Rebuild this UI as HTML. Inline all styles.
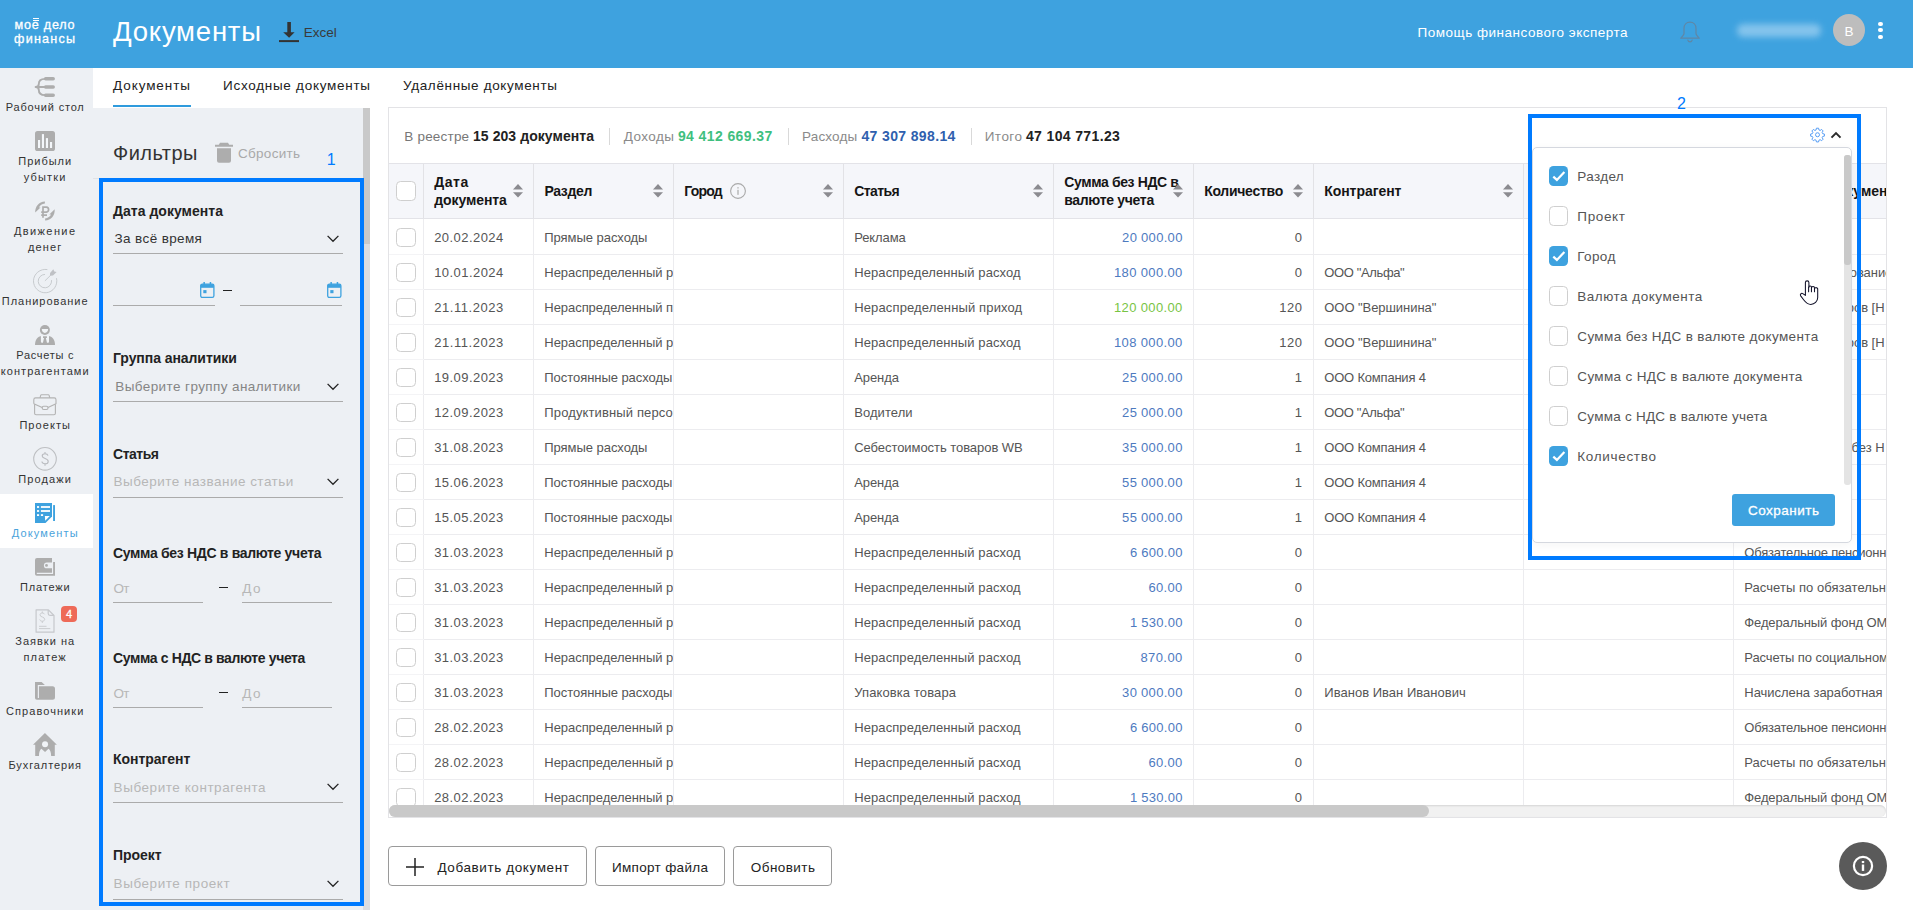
<!DOCTYPE html>
<html lang="ru"><head><meta charset="utf-8"><title>Документы</title>
<style>
html,body{margin:0;padding:0;}
body{width:1913px;height:910px;overflow:hidden;background:#fff;position:relative;font-family:"Liberation Sans", sans-serif;}
.a{position:absolute;box-sizing:border-box;}
.t{position:absolute;white-space:nowrap;font-family:"Liberation Sans", sans-serif;}
svg{position:absolute;overflow:visible;}
</style></head><body>
<div class="a" style="left:0px;top:0px;width:1913px;height:68px;background:#3ea2df;"></div>
<div class="a" style="left:0px;top:68px;width:93px;height:842px;background:#edf0f4;"></div>
<div class="a" style="left:93px;top:108px;width:277px;height:802px;background:#edf0f4;"></div>
<span class="t" style="left:14.60px;top:16.13px;font-size:12.6px;line-height:18px;font-weight:400;color:#fff;letter-spacing:0.772px;-webkit-text-stroke:0.3px #fff;">мое дело</span>
<span class="t" style="left:14.10px;top:30.13px;font-size:12.6px;line-height:18px;font-weight:400;color:#fff;letter-spacing:1.221px;-webkit-text-stroke:0.3px #fff;">финансы</span>
<div class="a" style="left:33px;top:18.4px;width:6px;height:1px;background:#fff;"></div>
<div class="a" style="left:33px;top:20.3px;width:6px;height:1px;background:#fff;"></div>
<span class="t" style="left:113.00px;top:12.17px;font-size:27.5px;line-height:40px;font-weight:400;color:#fff;letter-spacing:0.779px;">Документы</span>
<svg style="left:278px;top:20px" width="22" height="24" viewBox="0 0 22 24"><path d="M9.3 2.1h3.6v10.1h3.7L11.1 17.7 5.2 12.2h4.1z" fill="#333"/><rect x="1" y="20.1" width="20" height="2" fill="#333"/></svg>
<span class="t" style="left:303.80px;top:23.12px;font-size:13.5px;line-height:20px;font-weight:400;color:#3a3a3a;letter-spacing:-0.004px;">Excel</span>
<span class="t" style="left:1417.60px;top:23.12px;font-size:13.5px;line-height:20px;font-weight:400;color:#fff;letter-spacing:0.498px;">Помощь финансового эксперта</span>
<svg style="left:1678px;top:20px" width="24" height="26" viewBox="0 0 24 26"><path d="M12 2.2c-3.6 0-6 2.7-6 6.2v5.2c0 1.6-1.6 3-3.3 4.6h18.6c-1.7-1.6-3.3-3-3.3-4.6V8.4c0-3.5-2.4-6.2-6-6.2z" fill="none" stroke="#5f87a6" stroke-width="1.2" stroke-linejoin="round"/><path d="M9.6 19.6c.3 1.4 1.2 2.2 2.4 2.2s2.100-.8 2.4-2.200" fill="none" stroke="#5f87a6" stroke-width="1.2"/></svg>
<div class="a" style="left:1737px;top:24px;width:84px;height:13px;background:#8cc8ee;border-radius:6px;filter:blur(3px);opacity:.9"></div>
<div class="a" style="left:1833px;top:14px;width:32px;height:32px;border-radius:50%;background:#bdbdbd"></div>
<span class="t" style="left:1849.00px;transform:translateX(-50%);top:21.62px;font-size:13.5px;line-height:20px;font-weight:400;color:#fff;">В</span>
<div class="a" style="left:1878.3px;top:21.5px;width:4.4px;height:4.4px;border-radius:50%;background:#fff"></div>
<div class="a" style="left:1878.3px;top:28px;width:4.4px;height:4.4px;border-radius:50%;background:#fff"></div>
<div class="a" style="left:1878.3px;top:34.6px;width:4.4px;height:4.4px;border-radius:50%;background:#fff"></div>
<div class="a" style="left:0px;top:494px;width:93px;height:54px;background:#fff;"></div>
<span class="t" style="left:45.20px;transform:translateX(-50%);top:99.19px;font-size:11px;line-height:16px;font-weight:400;color:#333;letter-spacing:0.812px;">Рабочий стол</span>
<span class="t" style="left:45.20px;transform:translateX(-50%);top:153.19px;font-size:11px;line-height:16px;font-weight:400;color:#333;letter-spacing:0.958px;">Прибыли</span>
<span class="t" style="left:45.20px;transform:translateX(-50%);top:169.19px;font-size:11px;line-height:16px;font-weight:400;color:#333;letter-spacing:1.194px;">убытки</span>
<span class="t" style="left:45.20px;transform:translateX(-50%);top:223.19px;font-size:11px;line-height:16px;font-weight:400;color:#333;letter-spacing:1.405px;">Движение</span>
<span class="t" style="left:45.20px;transform:translateX(-50%);top:239.19px;font-size:11px;line-height:16px;font-weight:400;color:#333;letter-spacing:1.162px;">денег</span>
<span class="t" style="left:45.20px;transform:translateX(-50%);top:293.19px;font-size:11px;line-height:16px;font-weight:400;color:#333;letter-spacing:0.966px;">Планирование</span>
<span class="t" style="left:45.20px;transform:translateX(-50%);top:347.19px;font-size:11px;line-height:16px;font-weight:400;color:#333;letter-spacing:0.706px;">Расчеты с</span>
<span class="t" style="left:45.20px;transform:translateX(-50%);top:363.19px;font-size:11px;line-height:16px;font-weight:400;color:#333;letter-spacing:1.066px;">контрагентами</span>
<span class="t" style="left:45.20px;transform:translateX(-50%);top:417.19px;font-size:11px;line-height:16px;font-weight:400;color:#333;letter-spacing:1.060px;">Проекты</span>
<span class="t" style="left:45.20px;transform:translateX(-50%);top:471.19px;font-size:11px;line-height:16px;font-weight:400;color:#333;letter-spacing:1.124px;">Продажи</span>
<span class="t" style="left:45.20px;transform:translateX(-50%);top:525.19px;font-size:11px;line-height:16px;font-weight:400;color:#4aa3dc;letter-spacing:1.150px;">Документы</span>
<span class="t" style="left:45.20px;transform:translateX(-50%);top:579.19px;font-size:11px;line-height:16px;font-weight:400;color:#333;letter-spacing:0.846px;">Платежи</span>
<span class="t" style="left:45.20px;transform:translateX(-50%);top:633.19px;font-size:11px;line-height:16px;font-weight:400;color:#333;letter-spacing:1.015px;">Заявки на</span>
<span class="t" style="left:45.20px;transform:translateX(-50%);top:649.19px;font-size:11px;line-height:16px;font-weight:400;color:#333;letter-spacing:1.134px;">платеж</span>
<span class="t" style="left:45.20px;transform:translateX(-50%);top:703.19px;font-size:11px;line-height:16px;font-weight:400;color:#333;letter-spacing:1.066px;">Справочники</span>
<span class="t" style="left:45.20px;transform:translateX(-50%);top:757.19px;font-size:11px;line-height:16px;font-weight:400;color:#333;letter-spacing:0.895px;">Бухгалтерия</span>
<svg style="left:35px;top:77px" width="20" height="20" viewBox="0 0 20 20"><g fill="none" stroke="#adadad" stroke-linecap="round"><path d="M10.600 1.800H18.200M10.600 10H18.200M10.600 18.200H18.200" stroke-width="3.500"/><path d="M10 1.900C5.500 1.900 3.800 4 3.800 7C3.800 9 2.500 10 0.600 10C2.500 10 3.800 11 3.800 13C3.800 16 5.500 18.100 10 18.100M0.600 10H10" stroke-width="1.900"/></g></svg>
<svg style="left:35px;top:131px" width="20" height="20" viewBox="0 0 20 20"><rect width="20" height="20" rx="2.600" fill="#adadad"/><g fill="#f4f7fa"><rect x="3" y="9" width="2.100" height="8"/><rect x="6.900" y="3.100" width="2.100" height="13.900"/><rect x="10.900" y="7.100" width="2.100" height="9.900"/><rect x="15" y="11" width="2.100" height="6"/></g></svg>
<svg style="left:35px;top:201px" width="20" height="20" viewBox="0 0 20 20"><g fill="#adadad"><path d="M9.900 0.400V2.600C7 2.800 4.900 4.300 4 6.500H5.500L0.200 11.500C0 5.500 3.800 0.800 9.900 0.400Z"/><path d="M10.100 19.600V17.400C13 17.200 15.100 15.700 16 13.600H14.300L19.700 8.200C20 14.500 16.200 19.200 10.100 19.600Z"/></g><path d="M8 16.800V6.050H11.400A2.550 2.550 0 0 1 11.400 11.100H6.200M6.200 14.150H12" fill="none" stroke="#adadad" stroke-width="1.700"/></svg>
<svg style="left:33px;top:269px" width="24" height="24" viewBox="0 0 24 24"><g fill="none" stroke="#c3c6ca" stroke-width="0.900" stroke-linecap="round"><path d="M14 0.500A11.700 11.700 0 1 0 23.600 9.500"/><path d="M11.600 5.400A6.700 6.700 0 1 0 18.600 11.500"/><path d="M12.200 11.600L17.400 6.500"/></g><path d="M16.900 6.700L17.100 3.900L20.300 0.300L21.300 2.500L23.600 3.100L20 6.600Z" fill="#bfc1c5"/></svg>
<svg style="left:35px;top:325px" width="20" height="20" viewBox="0 0 20 20"><circle cx="9.900" cy="5" r="5" fill="#adadad"/><path d="M6.750 4H13.100C13.100 6.300 11.700 7.900 9.900 7.900C8.100 7.900 6.750 6.300 6.750 4Z" fill="#f1f4f7"/><path d="M0 20C0 14.500 3 11 6.500 11H13.500C17 11 20 14.500 20 20Z" fill="#adadad"/><path d="M5.900 11H14V16.400C14 17.300 13.500 17.800 12.800 17.800H7.100C6.400 17.800 5.900 17.300 5.900 16.400Z" fill="#f1f4f7"/><path d="M8 11.200H11.900V12.900H10.900L12 18H7.900L9 12.900H8Z" fill="#adadad"/></svg>
<svg style="left:33px;top:393px" width="24" height="24" viewBox="0 0 24 24"><g fill="none" stroke="#b2b2b2" stroke-width="1.100" stroke-linejoin="round"><path d="M7 4.900L7.700 2.400Q7.900 1.800 8.500 1.800H15.300Q15.900 1.800 16.100 2.400L16.800 4.900"/><path d="M0.800 10.700V6.700Q0.800 4.900 2.600 4.900H21.200Q23 4.900 23 6.700V10.700L15 14.600M0.800 10.700L9.200 14.600"/><rect x="9.200" y="13.300" width="5.800" height="3.200" rx="1.500"/><path d="M1.600 11.200V20.200Q1.600 21.700 3.100 21.700H20.900Q22.400 21.700 22.400 20.200V11.200"/></g></svg>
<svg style="left:33px;top:447px" width="24" height="24" viewBox="0 0 24 24"><circle cx="12" cy="11.800" r="11.300" fill="none" stroke="#bdbfc2" stroke-width="1.100"/><path d="M15 8.700C14.700 7.400 13.600 6.700 12 6.700C10.300 6.700 9.200 7.600 9.200 9C9.200 12.200 15.200 10.900 15.200 14.400C15.200 15.800 14 16.800 12 16.800C10.300 16.800 9.100 16 8.900 14.500M12 5V6.700M12 16.800V18.700" fill="none" stroke="#b9bbbf" stroke-width="1.100"/></svg>
<svg style="left:35px;top:503px" width="20" height="20" viewBox="0 0 20 20"><path d="M0 0H17V13.500L10.500 20H0Z" fill="#3ea2df"/><g fill="#fff"><rect x="2" y="3.100" width="2.100" height="1.800"/><rect x="5.900" y="3.100" width="9.100" height="1.800"/><rect x="2" y="7.100" width="2.100" height="1.800"/><rect x="5.900" y="7.100" width="9.100" height="1.800"/><rect x="2" y="11.200" width="2.100" height="1.800"/><rect x="5.900" y="11.200" width="2.200" height="1.800"/><path d="M9.900 13H14.800L10.200 17.800Z"/></g><rect x="18.100" y="2.100" width="1.900" height="15.900" fill="#3ea2df"/></svg>
<svg style="left:35px;top:557px" width="20" height="20" viewBox="0 0 20 20"><path d="M2 1.100H17V5.500H11.800A2.900 2.900 0 0 0 11.800 11.300H17V15.750H1.800V17.100H18.100V5H20V18.700H1.800Q0 18.700 0 16.900V3.100Q0 1.100 2 1.100Z" fill="#adadad"/><circle cx="11.500" cy="8.450" r="1.400" fill="#adadad"/></svg>
<svg style="left:35px;top:609px" width="20" height="24" viewBox="0 0 20 24"><g fill="none" stroke="#c6c8cc" stroke-width="1.200" stroke-linejoin="round"><path d="M1.100 0.800H13.400L19 6.500V23.200H1.100Z"/><path d="M13.200 1V4.500Q13.200 6.300 15 6.300H18.800"/></g><g fill="none" stroke="#c6c8cc" stroke-width="0.900"><path d="M9.600 5.300C9.300 4.400 8.400 4 7.300 4C5.900 4 5 4.700 5 5.900C5 8.500 9.700 7.500 9.700 10.300C9.700 11.400 8.800 12.200 7.300 12.200C5.900 12.200 5 11.600 4.700 10.500M7.300 2.400V4M7.300 12.200V14"/><path d="M4 17.300H11.500M4 19.600H15.300"/></g></svg>
<div class="a" style="left:61px;top:606px;width:16px;height:16px;border-radius:4px;background:#ee6a58"></div>
<span class="t" style="left:69.00px;transform:translateX(-50%);top:606.19px;font-size:11px;line-height:16px;font-weight:400;color:#fff;-webkit-text-stroke:0.3px #fff;">4</span>
<svg style="left:35px;top:681px" width="20" height="20" viewBox="0 0 20 20"><path d="M0 1.100H6.600L9.900 3.900H2.800V17.100H3.950V5.200H17.500Q20 5.200 20 7.700V16.200Q20 18.700 17.500 18.700H1.800Q0 18.700 0 16.900Z" fill="#adadad"/></svg>
<svg style="left:33px;top:733px" width="24" height="24" viewBox="0 0 24 24"><path d="M11.950 0L23.900 11.700H21.800V22.900H18.150C18.150 19 17 17 15.500 15.800L12.050 19.100L8.400 15.800C7 17 5.950 19 5.950 22.900H2.200V11.700H0Z" fill="#adadad"/><circle cx="12.050" cy="11.300" r="3" fill="#f1f4f7"/></svg>
<span class="t" style="left:113.00px;top:76.12px;font-size:13.5px;line-height:20px;font-weight:400;color:#222;letter-spacing:0.926px;">Документы</span>
<span class="t" style="left:223.00px;top:76.12px;font-size:13.5px;line-height:20px;font-weight:400;color:#222;letter-spacing:0.722px;">Исходные документы</span>
<span class="t" style="left:403.00px;top:76.12px;font-size:13.5px;line-height:20px;font-weight:400;color:#222;letter-spacing:0.648px;">Удалённые документы</span>
<div class="a" style="left:113px;top:105px;width:78px;height:2px;background:#2f9bdd;"></div>
<div class="a" style="left:93px;top:178px;width:270px;height:1px;background:#dfe2e6;"></div>
<div class="a" style="left:363px;top:108px;width:7px;height:802px;background:#dcdde0;"></div>
<div class="a" style="left:363px;top:108px;width:7px;height:136px;background:#c9c9c9;"></div>
<span class="t" style="left:113.00px;top:139.07px;font-size:20px;line-height:29px;font-weight:400;color:#333;letter-spacing:0.473px;">Фильтры</span>
<svg style="left:215px;top:142px" width="18" height="22" viewBox="0 0 18 22"><path d="M5 0.800H13L14.200 2.800H18V4.800H0V2.800H3.800Z" fill="#adadad"/><path d="M2 6.300H16V18.800Q16 20.800 14 20.800H4Q2 20.800 2 18.800Z" fill="#adadad"/></svg>
<span class="t" style="left:238.00px;top:143.82px;font-size:13.5px;line-height:20px;font-weight:400;color:#a9a9a9;letter-spacing:0.283px;">Сбросить</span>
<span class="t" style="left:113.00px;top:201.45px;font-size:14px;line-height:20px;font-weight:700;color:#222;letter-spacing:0.031px;">Дата документа</span>
<span class="t" style="left:114.60px;top:229.12px;font-size:13.5px;line-height:20px;font-weight:400;color:#333;letter-spacing:0.370px;">За всё время</span>
<svg style="left:327.2px;top:234.5px" width="12" height="8" viewBox="0 0 12 8"><path d="M0.600 0.900L6 6.300L11.400 0.900" fill="none" stroke="#222" stroke-width="1.300"/></svg>
<div class="a" style="left:113px;top:253px;width:230px;height:1px;background:#ababab;"></div>
<div class="a" style="left:113px;top:305px;width:102px;height:1px;background:#ababab;"></div>
<div class="a" style="left:240px;top:305px;width:102px;height:1px;background:#ababab;"></div>
<svg style="left:199.6px;top:282px" width="15" height="16" viewBox="0 0 15 16"><rect x="0.700" y="2.200" width="13.200" height="13.200" rx="1.600" fill="none" stroke="#3ea2df" stroke-width="1.300"/><rect x="0.700" y="2.200" width="13.200" height="3.600" fill="#3ea2df"/><rect x="3.400" y="0" width="1.500" height="3" fill="#3ea2df"/><rect x="9.700" y="0" width="1.500" height="3" fill="#3ea2df"/><rect x="3.300" y="8.100" width="3.200" height="3.100" fill="#3ea2df"/></svg>
<svg style="left:326.6px;top:282px" width="15" height="16" viewBox="0 0 15 16"><rect x="0.700" y="2.200" width="13.200" height="13.200" rx="1.600" fill="none" stroke="#3ea2df" stroke-width="1.300"/><rect x="0.700" y="2.200" width="13.200" height="3.600" fill="#3ea2df"/><rect x="3.400" y="0" width="1.500" height="3" fill="#3ea2df"/><rect x="9.700" y="0" width="1.500" height="3" fill="#3ea2df"/><rect x="3.300" y="8.100" width="3.200" height="3.100" fill="#3ea2df"/></svg>
<div class="a" style="left:223px;top:290px;width:9px;height:1.2px;background:#222;"></div>
<span class="t" style="left:113.00px;top:347.95px;font-size:14px;line-height:20px;font-weight:700;color:#222;letter-spacing:-0.063px;">Группа аналитики</span>
<span class="t" style="left:115.30px;top:377.12px;font-size:13.5px;line-height:20px;font-weight:400;color:#858585;letter-spacing:0.402px;">Выберите группу аналитики</span>
<svg style="left:327.2px;top:382.5px" width="12" height="8" viewBox="0 0 12 8"><path d="M0.600 0.900L6 6.300L11.400 0.900" fill="none" stroke="#222" stroke-width="1.300"/></svg>
<div class="a" style="left:113px;top:401px;width:230px;height:1px;background:#ababab;"></div>
<span class="t" style="left:113.00px;top:443.95px;font-size:14px;line-height:20px;font-weight:700;color:#222;letter-spacing:-0.478px;">Статья</span>
<span class="t" style="left:113.60px;top:472.12px;font-size:13.5px;line-height:20px;font-weight:400;color:#b7b7b7;letter-spacing:0.479px;">Выберите название статьи</span>
<svg style="left:327.2px;top:477.5px" width="12" height="8" viewBox="0 0 12 8"><path d="M0.600 0.900L6 6.300L11.400 0.900" fill="none" stroke="#222" stroke-width="1.300"/></svg>
<div class="a" style="left:113px;top:497px;width:230px;height:1px;background:#ababab;"></div>
<span class="t" style="left:113.00px;top:543.15px;font-size:14px;line-height:20px;font-weight:700;color:#222;letter-spacing:-0.322px;">Сумма без НДС в валюте учета</span>
<span class="t" style="left:113.60px;top:578.62px;font-size:13.5px;line-height:20px;font-weight:400;color:#b7b7b7;letter-spacing:-0.800px;">От</span>
<span class="t" style="left:242.30px;top:578.62px;font-size:13.5px;line-height:20px;font-weight:400;color:#b7b7b7;letter-spacing:1.488px;">До</span>
<div class="a" style="left:218.5px;top:587.2px;width:9px;height:1.2px;background:#222;"></div>
<div class="a" style="left:113px;top:602px;width:90px;height:1px;background:#ababab;"></div>
<div class="a" style="left:242px;top:602px;width:90px;height:1px;background:#ababab;"></div>
<span class="t" style="left:113.00px;top:647.95px;font-size:14px;line-height:20px;font-weight:700;color:#222;letter-spacing:-0.367px;">Сумма с НДС в валюте учета</span>
<span class="t" style="left:113.60px;top:683.62px;font-size:13.5px;line-height:20px;font-weight:400;color:#b7b7b7;letter-spacing:-0.800px;">От</span>
<span class="t" style="left:242.30px;top:683.62px;font-size:13.5px;line-height:20px;font-weight:400;color:#b7b7b7;letter-spacing:1.488px;">До</span>
<div class="a" style="left:218.5px;top:692.2px;width:9px;height:1.2px;background:#222;"></div>
<div class="a" style="left:113px;top:707px;width:90px;height:1px;background:#ababab;"></div>
<div class="a" style="left:242px;top:707px;width:90px;height:1px;background:#ababab;"></div>
<span class="t" style="left:113.00px;top:748.65px;font-size:14px;line-height:20px;font-weight:700;color:#222;letter-spacing:-0.032px;">Контрагент</span>
<span class="t" style="left:113.60px;top:777.62px;font-size:13.5px;line-height:20px;font-weight:400;color:#b7b7b7;letter-spacing:0.553px;">Выберите контрагента</span>
<svg style="left:327.2px;top:783px" width="12" height="8" viewBox="0 0 12 8"><path d="M0.600 0.900L6 6.300L11.400 0.900" fill="none" stroke="#222" stroke-width="1.300"/></svg>
<div class="a" style="left:113px;top:802px;width:230px;height:1px;background:#ababab;"></div>
<span class="t" style="left:113.00px;top:844.75px;font-size:14px;line-height:20px;font-weight:700;color:#222;letter-spacing:-0.046px;">Проект</span>
<span class="t" style="left:113.60px;top:874.12px;font-size:13.5px;line-height:20px;font-weight:400;color:#b7b7b7;letter-spacing:0.556px;">Выберите проект</span>
<svg style="left:327.2px;top:879.5px" width="12" height="8" viewBox="0 0 12 8"><path d="M0.600 0.900L6 6.300L11.400 0.900" fill="none" stroke="#222" stroke-width="1.300"/></svg>
<div class="a" style="left:113px;top:899px;width:230px;height:1px;background:#ababab;"></div>
<div class="a" style="left:388px;top:107px;width:1499px;height:711px;background:#fff;border:1px solid #e3e3e6"></div>
<span class="t" style="left:404.30px;top:127.42px;font-size:13.5px;line-height:20px;font-weight:400;color:#777;letter-spacing:0.196px;">В реестре</span>
<span class="t" style="left:473.00px;top:126.45px;font-size:14px;line-height:20px;font-weight:700;color:#222;letter-spacing:0.067px;">15 203 документа</span>
<div class="a" style="left:609px;top:127.5px;width:1px;height:17.5px;background:#d9d9d9;"></div>
<span class="t" style="left:623.80px;top:127.42px;font-size:13.5px;line-height:20px;font-weight:400;color:#8a8a8a;letter-spacing:0.431px;">Доходы</span>
<span class="t" style="left:677.90px;top:126.45px;font-size:14px;line-height:20px;font-weight:700;color:#3fbf7f;letter-spacing:0.397px;">94 412 669.37</span>
<div class="a" style="left:787.5px;top:127.5px;width:1px;height:17.5px;background:#d9d9d9;"></div>
<span class="t" style="left:802.00px;top:127.42px;font-size:13.5px;line-height:20px;font-weight:400;color:#8a8a8a;letter-spacing:0.164px;">Расходы</span>
<span class="t" style="left:861.40px;top:126.45px;font-size:14px;line-height:20px;font-weight:700;color:#2f5fae;letter-spacing:0.372px;">47 307 898.14</span>
<div class="a" style="left:970.5px;top:127.5px;width:1px;height:17.5px;background:#d9d9d9;"></div>
<span class="t" style="left:984.70px;top:127.42px;font-size:13.5px;line-height:20px;font-weight:400;color:#8a8a8a;letter-spacing:0.477px;">Итого</span>
<span class="t" style="left:1025.90px;top:126.45px;font-size:14px;line-height:20px;font-weight:700;color:#222;letter-spacing:0.372px;">47 104 771.23</span>
<div class="a" style="left:389px;top:163px;width:1497px;height:56px;background:#f5f6fa;border-top:1px solid #e3e3e8;border-bottom:1px solid #e3e3e8;"></div>
<div class="a" style="left:423px;top:164px;width:1px;height:54px;background:#e2e2e6;"></div>
<div class="a" style="left:423px;top:219px;width:1px;height:586px;background:#ececef;"></div>
<div class="a" style="left:533px;top:164px;width:1px;height:54px;background:#e2e2e6;"></div>
<div class="a" style="left:533px;top:219px;width:1px;height:586px;background:#ececef;"></div>
<div class="a" style="left:673px;top:164px;width:1px;height:54px;background:#e2e2e6;"></div>
<div class="a" style="left:673px;top:219px;width:1px;height:586px;background:#ececef;"></div>
<div class="a" style="left:843px;top:164px;width:1px;height:54px;background:#e2e2e6;"></div>
<div class="a" style="left:843px;top:219px;width:1px;height:586px;background:#ececef;"></div>
<div class="a" style="left:1053px;top:164px;width:1px;height:54px;background:#e2e2e6;"></div>
<div class="a" style="left:1053px;top:219px;width:1px;height:586px;background:#ececef;"></div>
<div class="a" style="left:1193px;top:164px;width:1px;height:54px;background:#e2e2e6;"></div>
<div class="a" style="left:1193px;top:219px;width:1px;height:586px;background:#ececef;"></div>
<div class="a" style="left:1313px;top:164px;width:1px;height:54px;background:#e2e2e6;"></div>
<div class="a" style="left:1313px;top:219px;width:1px;height:586px;background:#ececef;"></div>
<div class="a" style="left:1523px;top:164px;width:1px;height:54px;background:#e2e2e6;"></div>
<div class="a" style="left:1523px;top:219px;width:1px;height:586px;background:#ececef;"></div>
<div class="a" style="left:1733px;top:164px;width:1px;height:54px;background:#e2e2e6;"></div>
<div class="a" style="left:1733px;top:219px;width:1px;height:586px;background:#ececef;"></div>
<div class="a" style="left:424px;top:253.5px;width:1462px;height:1px;background:#ececef;"></div>
<div class="a" style="left:424px;top:288.5px;width:1462px;height:1px;background:#ececef;"></div>
<div class="a" style="left:424px;top:323.5px;width:1462px;height:1px;background:#ececef;"></div>
<div class="a" style="left:424px;top:358.5px;width:1462px;height:1px;background:#ececef;"></div>
<div class="a" style="left:424px;top:393.5px;width:1462px;height:1px;background:#ececef;"></div>
<div class="a" style="left:424px;top:428.5px;width:1462px;height:1px;background:#ececef;"></div>
<div class="a" style="left:424px;top:463.5px;width:1462px;height:1px;background:#ececef;"></div>
<div class="a" style="left:424px;top:498.5px;width:1462px;height:1px;background:#ececef;"></div>
<div class="a" style="left:424px;top:533.5px;width:1462px;height:1px;background:#ececef;"></div>
<div class="a" style="left:424px;top:568.5px;width:1462px;height:1px;background:#ececef;"></div>
<div class="a" style="left:424px;top:603.5px;width:1462px;height:1px;background:#ececef;"></div>
<div class="a" style="left:424px;top:638.5px;width:1462px;height:1px;background:#ececef;"></div>
<div class="a" style="left:424px;top:673.5px;width:1462px;height:1px;background:#ececef;"></div>
<div class="a" style="left:424px;top:708.5px;width:1462px;height:1px;background:#ececef;"></div>
<div class="a" style="left:424px;top:743.5px;width:1462px;height:1px;background:#ececef;"></div>
<div class="a" style="left:424px;top:778.5px;width:1462px;height:1px;background:#ececef;"></div>
<div class="a" style="left:389px;top:253.5px;width:35px;height:1px;background:#f4f4f6;"></div>
<div class="a" style="left:389px;top:288.5px;width:35px;height:1px;background:#f4f4f6;"></div>
<div class="a" style="left:389px;top:323.5px;width:35px;height:1px;background:#f4f4f6;"></div>
<div class="a" style="left:389px;top:358.5px;width:35px;height:1px;background:#f4f4f6;"></div>
<div class="a" style="left:389px;top:393.5px;width:35px;height:1px;background:#f4f4f6;"></div>
<div class="a" style="left:389px;top:428.5px;width:35px;height:1px;background:#f4f4f6;"></div>
<div class="a" style="left:389px;top:463.5px;width:35px;height:1px;background:#f4f4f6;"></div>
<div class="a" style="left:389px;top:498.5px;width:35px;height:1px;background:#f4f4f6;"></div>
<div class="a" style="left:389px;top:533.5px;width:35px;height:1px;background:#f4f4f6;"></div>
<div class="a" style="left:389px;top:568.5px;width:35px;height:1px;background:#f4f4f6;"></div>
<div class="a" style="left:389px;top:603.5px;width:35px;height:1px;background:#f4f4f6;"></div>
<div class="a" style="left:389px;top:638.5px;width:35px;height:1px;background:#f4f4f6;"></div>
<div class="a" style="left:389px;top:673.5px;width:35px;height:1px;background:#f4f4f6;"></div>
<div class="a" style="left:389px;top:708.5px;width:35px;height:1px;background:#f4f4f6;"></div>
<div class="a" style="left:389px;top:743.5px;width:35px;height:1px;background:#f4f4f6;"></div>
<div class="a" style="left:389px;top:778.5px;width:35px;height:1px;background:#f4f4f6;"></div>
<div class="a" style="left:396.2px;top:181px;width:19.5px;height:19.5px;border-radius:4.500px;background:#fff;border:1.300px solid #cfcfcf"></div>
<span class="t" style="left:434.30px;top:172.35px;font-size:14px;line-height:20px;font-weight:700;color:#151515;letter-spacing:0.531px;">Дата</span>
<span class="t" style="left:434.30px;top:190.35px;font-size:14px;line-height:20px;font-weight:700;color:#151515;letter-spacing:-0.100px;">документа</span>
<svg style="left:513px;top:184px" width="10" height="14" viewBox="0 0 10 14"><path d="M5 0L10 5.400H0Z" fill="#8b8b90"/><path d="M5 13.600L10 8.200H0Z" fill="#8b8b90"/></svg>
<span class="t" style="left:544.50px;top:180.95px;font-size:14px;line-height:20px;font-weight:700;color:#151515;letter-spacing:-0.368px;">Раздел</span>
<svg style="left:653px;top:184px" width="10" height="14" viewBox="0 0 10 14"><path d="M5 0L10 5.400H0Z" fill="#8b8b90"/><path d="M5 13.600L10 8.200H0Z" fill="#8b8b90"/></svg>
<span class="t" style="left:684.20px;top:180.95px;font-size:14px;line-height:20px;font-weight:700;color:#151515;letter-spacing:-0.800px;">Город</span>
<svg style="left:823px;top:184px" width="10" height="14" viewBox="0 0 10 14"><path d="M5 0L10 5.400H0Z" fill="#8b8b90"/><path d="M5 13.600L10 8.200H0Z" fill="#8b8b90"/></svg>
<svg style="left:730px;top:182.800px" width="16" height="16" viewBox="0 0 16 16"><circle cx="8" cy="8" r="7.400" fill="none" stroke="#a9a9a9" stroke-width="1.100"/><rect x="7.400" y="6.800" width="1.200" height="5" fill="#a9a9a9"/><rect x="7.400" y="4.200" width="1.200" height="1.300" fill="#a9a9a9"/></svg>
<span class="t" style="left:854.20px;top:180.95px;font-size:14px;line-height:20px;font-weight:700;color:#151515;letter-spacing:-0.578px;">Статья</span>
<svg style="left:1033px;top:184px" width="10" height="14" viewBox="0 0 10 14"><path d="M5 0L10 5.400H0Z" fill="#8b8b90"/><path d="M5 13.600L10 8.200H0Z" fill="#8b8b90"/></svg>
<span class="t" style="left:1064.20px;top:172.35px;font-size:14px;line-height:20px;font-weight:700;color:#151515;letter-spacing:-0.371px;">Сумма без НДС в</span>
<span class="t" style="left:1064.20px;top:190.35px;font-size:14px;line-height:20px;font-weight:700;color:#151515;letter-spacing:-0.310px;">валюте учета</span>
<svg style="left:1173.3px;top:184px" width="10" height="14" viewBox="0 0 10 14"><path d="M5 0L10 5.400H0Z" fill="#8b8b90"/><path d="M5 13.600L10 8.200H0Z" fill="#8b8b90"/></svg>
<span class="t" style="left:1204.20px;top:180.95px;font-size:14px;line-height:20px;font-weight:700;color:#151515;letter-spacing:-0.288px;">Количество</span>
<svg style="left:1292.8px;top:184px" width="10" height="14" viewBox="0 0 10 14"><path d="M5 0L10 5.400H0Z" fill="#8b8b90"/><path d="M5 13.600L10 8.200H0Z" fill="#8b8b90"/></svg>
<span class="t" style="left:1324.20px;top:180.95px;font-size:14px;line-height:20px;font-weight:700;color:#151515;letter-spacing:-0.043px;">Контрагент</span>
<svg style="left:1502.8px;top:184px" width="10" height="14" viewBox="0 0 10 14"><path d="M5 0L10 5.400H0Z" fill="#8b8b90"/><path d="M5 13.600L10 8.200H0Z" fill="#8b8b90"/></svg>
<div class="a" style="left:1734px;top:164px;width:152px;height:54px;overflow:hidden">
<span class="t" style="left:94.90px;top:16.95px;font-size:14px;line-height:20px;font-weight:700;color:#151515;">документа</span>
</div>
<div class="a" style="left:534px;top:0;width:139px;height:805px;overflow:hidden">
<span class="t" style="left:10.30px;top:228.30px;font-size:13px;line-height:19px;font-weight:400;color:#555;letter-spacing:-0.052px;">Прямые расходы</span>
<span class="t" style="left:10.30px;top:263.30px;font-size:13px;line-height:19px;font-weight:400;color:#555;letter-spacing:-0.05px;">Нераспределенный расход</span>
<span class="t" style="left:10.30px;top:298.30px;font-size:13px;line-height:19px;font-weight:400;color:#555;letter-spacing:-0.05px;">Нераспределенный приход</span>
<span class="t" style="left:10.30px;top:333.30px;font-size:13px;line-height:19px;font-weight:400;color:#555;letter-spacing:-0.05px;">Нераспределенный расход</span>
<span class="t" style="left:10.30px;top:368.30px;font-size:13px;line-height:19px;font-weight:400;color:#555;letter-spacing:-0.05px;">Постоянные расходы</span>
<span class="t" style="left:10.30px;top:403.30px;font-size:13px;line-height:19px;font-weight:400;color:#555;letter-spacing:0.13px;">Продуктивный персонал</span>
<span class="t" style="left:10.30px;top:438.30px;font-size:13px;line-height:19px;font-weight:400;color:#555;letter-spacing:-0.052px;">Прямые расходы</span>
<span class="t" style="left:10.30px;top:473.30px;font-size:13px;line-height:19px;font-weight:400;color:#555;letter-spacing:-0.05px;">Постоянные расходы</span>
<span class="t" style="left:10.30px;top:508.30px;font-size:13px;line-height:19px;font-weight:400;color:#555;letter-spacing:-0.05px;">Постоянные расходы</span>
<span class="t" style="left:10.30px;top:543.30px;font-size:13px;line-height:19px;font-weight:400;color:#555;letter-spacing:-0.05px;">Нераспределенный расход</span>
<span class="t" style="left:10.30px;top:578.30px;font-size:13px;line-height:19px;font-weight:400;color:#555;letter-spacing:-0.05px;">Нераспределенный расход</span>
<span class="t" style="left:10.30px;top:613.30px;font-size:13px;line-height:19px;font-weight:400;color:#555;letter-spacing:-0.05px;">Нераспределенный расход</span>
<span class="t" style="left:10.30px;top:648.30px;font-size:13px;line-height:19px;font-weight:400;color:#555;letter-spacing:-0.05px;">Нераспределенный расход</span>
<span class="t" style="left:10.30px;top:683.30px;font-size:13px;line-height:19px;font-weight:400;color:#555;letter-spacing:-0.05px;">Постоянные расходы</span>
<span class="t" style="left:10.30px;top:718.30px;font-size:13px;line-height:19px;font-weight:400;color:#555;letter-spacing:-0.05px;">Нераспределенный расход</span>
<span class="t" style="left:10.30px;top:753.30px;font-size:13px;line-height:19px;font-weight:400;color:#555;letter-spacing:-0.05px;">Нераспределенный расход</span>
<span class="t" style="left:10.30px;top:788.30px;font-size:13px;line-height:19px;font-weight:400;color:#555;letter-spacing:-0.05px;">Нераспределенный расход</span>
</div>
<div class="a" style="left:1734px;top:0;width:152px;height:805px;overflow:hidden">
<span class="t" style="right:-6.30px;top:263.30px;font-size:13px;line-height:19px;font-weight:400;color:#555;letter-spacing:-0.05px;">Оплата за оборудование</span>
<span class="t" style="right:1.50px;top:298.30px;font-size:13px;line-height:19px;font-weight:400;color:#555;letter-spacing:-0.05px;">Продажа товаров [Н</span>
<span class="t" style="right:1.50px;top:333.30px;font-size:13px;line-height:19px;font-weight:400;color:#555;letter-spacing:-0.05px;">Закупка товаров [Н</span>
<span class="t" style="right:1.50px;top:438.30px;font-size:13px;line-height:19px;font-weight:400;color:#555;letter-spacing:-0.05px;">Поступление без Н</span>
<span class="t" style="left:10.30px;top:543.30px;font-size:13px;line-height:19px;font-weight:400;color:#555;letter-spacing:-0.2px;">Обязательное пенсионное</span>
<span class="t" style="left:10.30px;top:578.30px;font-size:13px;line-height:19px;font-weight:400;color:#555;letter-spacing:0.05px;">Расчеты по обязательному</span>
<span class="t" style="left:10.30px;top:613.30px;font-size:13px;line-height:19px;font-weight:400;color:#555;letter-spacing:-0.12px;">Федеральный фонд ОМС</span>
<span class="t" style="left:10.30px;top:648.30px;font-size:13px;line-height:19px;font-weight:400;color:#555;letter-spacing:-0.1px;">Расчеты по социальному</span>
<span class="t" style="left:10.30px;top:683.30px;font-size:13px;line-height:19px;font-weight:400;color:#555;letter-spacing:-0.05px;">Начислена заработная плата</span>
<span class="t" style="left:10.30px;top:718.30px;font-size:13px;line-height:19px;font-weight:400;color:#555;letter-spacing:-0.2px;">Обязательное пенсионное</span>
<span class="t" style="left:10.30px;top:753.30px;font-size:13px;line-height:19px;font-weight:400;color:#555;letter-spacing:0.05px;">Расчеты по обязательному</span>
<span class="t" style="left:10.30px;top:788.30px;font-size:13px;line-height:19px;font-weight:400;color:#555;letter-spacing:-0.12px;">Федеральный фонд ОМС</span>
</div>
<div class="a" style="left:396.2px;top:227.5px;width:19.5px;height:19.5px;border-radius:4.500px;background:#fff;border:1.300px solid #cfcfcf"></div>
<span class="t" style="left:434.20px;top:228.30px;font-size:13px;line-height:19px;font-weight:400;color:#555;letter-spacing:0.447px;">20.02.2024</span>
<span class="t" style="left:854.20px;top:228.30px;font-size:13px;line-height:19px;font-weight:400;color:#555;letter-spacing:-0.093px;">Реклама</span>
<span class="t" style="right:730.30px;top:228.30px;font-size:13px;line-height:19px;font-weight:400;color:#4d7abf;letter-spacing:0.307px;">20 000.00</span>
<span class="t" style="right:610.50px;top:228.30px;font-size:13px;line-height:19px;font-weight:400;color:#555;letter-spacing:0.566px;">0</span>
<div class="a" style="left:396.2px;top:262.5px;width:19.5px;height:19.5px;border-radius:4.500px;background:#fff;border:1.300px solid #cfcfcf"></div>
<span class="t" style="left:434.20px;top:263.30px;font-size:13px;line-height:19px;font-weight:400;color:#555;letter-spacing:0.447px;">10.01.2024</span>
<span class="t" style="left:854.20px;top:263.30px;font-size:13px;line-height:19px;font-weight:400;color:#555;letter-spacing:0.094px;">Нераспределенный расход</span>
<span class="t" style="right:730.30px;top:263.30px;font-size:13px;line-height:19px;font-weight:400;color:#4d7abf;letter-spacing:0.369px;">180 000.00</span>
<span class="t" style="right:610.50px;top:263.30px;font-size:13px;line-height:19px;font-weight:400;color:#555;letter-spacing:0.566px;">0</span>
<span class="t" style="left:1324.30px;top:263.30px;font-size:13px;line-height:19px;font-weight:400;color:#555;letter-spacing:-0.374px;">ООО "Альфа"</span>
<div class="a" style="left:396.2px;top:297.5px;width:19.5px;height:19.5px;border-radius:4.500px;background:#fff;border:1.300px solid #cfcfcf"></div>
<span class="t" style="left:434.20px;top:298.30px;font-size:13px;line-height:19px;font-weight:400;color:#555;letter-spacing:0.555px;">21.11.2023</span>
<span class="t" style="left:854.20px;top:298.30px;font-size:13px;line-height:19px;font-weight:400;color:#555;letter-spacing:0.137px;">Нераспределенный приход</span>
<span class="t" style="right:730.30px;top:298.30px;font-size:13px;line-height:19px;font-weight:400;color:#78c444;letter-spacing:0.369px;">120 000.00</span>
<span class="t" style="right:610.50px;top:298.30px;font-size:13px;line-height:19px;font-weight:400;color:#555;letter-spacing:0.498px;">120</span>
<span class="t" style="left:1324.30px;top:298.30px;font-size:13px;line-height:19px;font-weight:400;color:#555;letter-spacing:-0.061px;">ООО "Вершинина"</span>
<div class="a" style="left:396.2px;top:332.5px;width:19.5px;height:19.5px;border-radius:4.500px;background:#fff;border:1.300px solid #cfcfcf"></div>
<span class="t" style="left:434.20px;top:333.30px;font-size:13px;line-height:19px;font-weight:400;color:#555;letter-spacing:0.555px;">21.11.2023</span>
<span class="t" style="left:854.20px;top:333.30px;font-size:13px;line-height:19px;font-weight:400;color:#555;letter-spacing:0.094px;">Нераспределенный расход</span>
<span class="t" style="right:730.30px;top:333.30px;font-size:13px;line-height:19px;font-weight:400;color:#4d7abf;letter-spacing:0.369px;">108 000.00</span>
<span class="t" style="right:610.50px;top:333.30px;font-size:13px;line-height:19px;font-weight:400;color:#555;letter-spacing:0.498px;">120</span>
<span class="t" style="left:1324.30px;top:333.30px;font-size:13px;line-height:19px;font-weight:400;color:#555;letter-spacing:-0.061px;">ООО "Вершинина"</span>
<div class="a" style="left:396.2px;top:367.5px;width:19.5px;height:19.5px;border-radius:4.500px;background:#fff;border:1.300px solid #cfcfcf"></div>
<span class="t" style="left:434.20px;top:368.30px;font-size:13px;line-height:19px;font-weight:400;color:#555;letter-spacing:0.447px;">19.09.2023</span>
<span class="t" style="left:854.20px;top:368.30px;font-size:13px;line-height:19px;font-weight:400;color:#555;letter-spacing:-0.068px;">Аренда</span>
<span class="t" style="right:730.30px;top:368.30px;font-size:13px;line-height:19px;font-weight:400;color:#4d7abf;letter-spacing:0.307px;">25 000.00</span>
<span class="t" style="right:610.50px;top:368.30px;font-size:13px;line-height:19px;font-weight:400;color:#555;letter-spacing:0.566px;">1</span>
<span class="t" style="left:1324.30px;top:368.30px;font-size:13px;line-height:19px;font-weight:400;color:#555;letter-spacing:-0.206px;">ООО Компания 4</span>
<div class="a" style="left:396.2px;top:402.5px;width:19.5px;height:19.5px;border-radius:4.500px;background:#fff;border:1.300px solid #cfcfcf"></div>
<span class="t" style="left:434.20px;top:403.30px;font-size:13px;line-height:19px;font-weight:400;color:#555;letter-spacing:0.447px;">12.09.2023</span>
<span class="t" style="left:854.20px;top:403.30px;font-size:13px;line-height:19px;font-weight:400;color:#555;letter-spacing:0.068px;">Водители</span>
<span class="t" style="right:730.30px;top:403.30px;font-size:13px;line-height:19px;font-weight:400;color:#4d7abf;letter-spacing:0.307px;">25 000.00</span>
<span class="t" style="right:610.50px;top:403.30px;font-size:13px;line-height:19px;font-weight:400;color:#555;letter-spacing:0.566px;">1</span>
<span class="t" style="left:1324.30px;top:403.30px;font-size:13px;line-height:19px;font-weight:400;color:#555;letter-spacing:-0.374px;">ООО "Альфа"</span>
<div class="a" style="left:396.2px;top:437.5px;width:19.5px;height:19.5px;border-radius:4.500px;background:#fff;border:1.300px solid #cfcfcf"></div>
<span class="t" style="left:434.20px;top:438.30px;font-size:13px;line-height:19px;font-weight:400;color:#555;letter-spacing:0.447px;">31.08.2023</span>
<span class="t" style="left:854.20px;top:438.30px;font-size:13px;line-height:19px;font-weight:400;color:#555;letter-spacing:-0.055px;">Себестоимость товаров WB</span>
<span class="t" style="right:730.30px;top:438.30px;font-size:13px;line-height:19px;font-weight:400;color:#4d7abf;letter-spacing:0.307px;">35 000.00</span>
<span class="t" style="right:610.50px;top:438.30px;font-size:13px;line-height:19px;font-weight:400;color:#555;letter-spacing:0.566px;">1</span>
<span class="t" style="left:1324.30px;top:438.30px;font-size:13px;line-height:19px;font-weight:400;color:#555;letter-spacing:-0.206px;">ООО Компания 4</span>
<div class="a" style="left:396.2px;top:472.5px;width:19.5px;height:19.5px;border-radius:4.500px;background:#fff;border:1.300px solid #cfcfcf"></div>
<span class="t" style="left:434.20px;top:473.30px;font-size:13px;line-height:19px;font-weight:400;color:#555;letter-spacing:0.447px;">15.06.2023</span>
<span class="t" style="left:854.20px;top:473.30px;font-size:13px;line-height:19px;font-weight:400;color:#555;letter-spacing:-0.068px;">Аренда</span>
<span class="t" style="right:730.30px;top:473.30px;font-size:13px;line-height:19px;font-weight:400;color:#4d7abf;letter-spacing:0.307px;">55 000.00</span>
<span class="t" style="right:610.50px;top:473.30px;font-size:13px;line-height:19px;font-weight:400;color:#555;letter-spacing:0.566px;">1</span>
<span class="t" style="left:1324.30px;top:473.30px;font-size:13px;line-height:19px;font-weight:400;color:#555;letter-spacing:-0.206px;">ООО Компания 4</span>
<div class="a" style="left:396.2px;top:507.5px;width:19.5px;height:19.5px;border-radius:4.500px;background:#fff;border:1.300px solid #cfcfcf"></div>
<span class="t" style="left:434.20px;top:508.30px;font-size:13px;line-height:19px;font-weight:400;color:#555;letter-spacing:0.447px;">15.05.2023</span>
<span class="t" style="left:854.20px;top:508.30px;font-size:13px;line-height:19px;font-weight:400;color:#555;letter-spacing:-0.068px;">Аренда</span>
<span class="t" style="right:730.30px;top:508.30px;font-size:13px;line-height:19px;font-weight:400;color:#4d7abf;letter-spacing:0.307px;">55 000.00</span>
<span class="t" style="right:610.50px;top:508.30px;font-size:13px;line-height:19px;font-weight:400;color:#555;letter-spacing:0.566px;">1</span>
<span class="t" style="left:1324.30px;top:508.30px;font-size:13px;line-height:19px;font-weight:400;color:#555;letter-spacing:-0.206px;">ООО Компания 4</span>
<div class="a" style="left:396.2px;top:542.5px;width:19.5px;height:19.5px;border-radius:4.500px;background:#fff;border:1.300px solid #cfcfcf"></div>
<span class="t" style="left:434.20px;top:543.30px;font-size:13px;line-height:19px;font-weight:400;color:#555;letter-spacing:0.447px;">31.03.2023</span>
<span class="t" style="left:854.20px;top:543.30px;font-size:13px;line-height:19px;font-weight:400;color:#555;letter-spacing:0.094px;">Нераспределенный расход</span>
<span class="t" style="right:730.30px;top:543.30px;font-size:13px;line-height:19px;font-weight:400;color:#4d7abf;letter-spacing:0.270px;">6 600.00</span>
<span class="t" style="right:610.50px;top:543.30px;font-size:13px;line-height:19px;font-weight:400;color:#555;letter-spacing:0.566px;">0</span>
<div class="a" style="left:396.2px;top:577.5px;width:19.5px;height:19.5px;border-radius:4.500px;background:#fff;border:1.300px solid #cfcfcf"></div>
<span class="t" style="left:434.20px;top:578.30px;font-size:13px;line-height:19px;font-weight:400;color:#555;letter-spacing:0.447px;">31.03.2023</span>
<span class="t" style="left:854.20px;top:578.30px;font-size:13px;line-height:19px;font-weight:400;color:#555;letter-spacing:0.094px;">Нераспределенный расход</span>
<span class="t" style="right:730.30px;top:578.30px;font-size:13px;line-height:19px;font-weight:400;color:#4d7abf;letter-spacing:0.338px;">60.00</span>
<span class="t" style="right:610.50px;top:578.30px;font-size:13px;line-height:19px;font-weight:400;color:#555;letter-spacing:0.566px;">0</span>
<div class="a" style="left:396.2px;top:612.5px;width:19.5px;height:19.5px;border-radius:4.500px;background:#fff;border:1.300px solid #cfcfcf"></div>
<span class="t" style="left:434.20px;top:613.30px;font-size:13px;line-height:19px;font-weight:400;color:#555;letter-spacing:0.447px;">31.03.2023</span>
<span class="t" style="left:854.20px;top:613.30px;font-size:13px;line-height:19px;font-weight:400;color:#555;letter-spacing:0.094px;">Нераспределенный расход</span>
<span class="t" style="right:730.30px;top:613.30px;font-size:13px;line-height:19px;font-weight:400;color:#4d7abf;letter-spacing:0.270px;">1 530.00</span>
<span class="t" style="right:610.50px;top:613.30px;font-size:13px;line-height:19px;font-weight:400;color:#555;letter-spacing:0.566px;">0</span>
<div class="a" style="left:396.2px;top:647.5px;width:19.5px;height:19.5px;border-radius:4.500px;background:#fff;border:1.300px solid #cfcfcf"></div>
<span class="t" style="left:434.20px;top:648.30px;font-size:13px;line-height:19px;font-weight:400;color:#555;letter-spacing:0.447px;">31.03.2023</span>
<span class="t" style="left:854.20px;top:648.30px;font-size:13px;line-height:19px;font-weight:400;color:#555;letter-spacing:0.094px;">Нераспределенный расход</span>
<span class="t" style="right:730.30px;top:648.30px;font-size:13px;line-height:19px;font-weight:400;color:#4d7abf;letter-spacing:0.427px;">870.00</span>
<span class="t" style="right:610.50px;top:648.30px;font-size:13px;line-height:19px;font-weight:400;color:#555;letter-spacing:0.566px;">0</span>
<div class="a" style="left:396.2px;top:682.5px;width:19.5px;height:19.5px;border-radius:4.500px;background:#fff;border:1.300px solid #cfcfcf"></div>
<span class="t" style="left:434.20px;top:683.30px;font-size:13px;line-height:19px;font-weight:400;color:#555;letter-spacing:0.447px;">31.03.2023</span>
<span class="t" style="left:854.20px;top:683.30px;font-size:13px;line-height:19px;font-weight:400;color:#555;letter-spacing:0.113px;">Упаковка товара</span>
<span class="t" style="right:730.30px;top:683.30px;font-size:13px;line-height:19px;font-weight:400;color:#4d7abf;letter-spacing:0.307px;">30 000.00</span>
<span class="t" style="right:610.50px;top:683.30px;font-size:13px;line-height:19px;font-weight:400;color:#555;letter-spacing:0.566px;">0</span>
<span class="t" style="left:1324.30px;top:683.30px;font-size:13px;line-height:19px;font-weight:400;color:#555;letter-spacing:0.022px;">Иванов Иван Иванович</span>
<div class="a" style="left:396.2px;top:717.5px;width:19.5px;height:19.5px;border-radius:4.500px;background:#fff;border:1.300px solid #cfcfcf"></div>
<span class="t" style="left:434.20px;top:718.30px;font-size:13px;line-height:19px;font-weight:400;color:#555;letter-spacing:0.447px;">28.02.2023</span>
<span class="t" style="left:854.20px;top:718.30px;font-size:13px;line-height:19px;font-weight:400;color:#555;letter-spacing:0.094px;">Нераспределенный расход</span>
<span class="t" style="right:730.30px;top:718.30px;font-size:13px;line-height:19px;font-weight:400;color:#4d7abf;letter-spacing:0.270px;">6 600.00</span>
<span class="t" style="right:610.50px;top:718.30px;font-size:13px;line-height:19px;font-weight:400;color:#555;letter-spacing:0.566px;">0</span>
<div class="a" style="left:396.2px;top:752.5px;width:19.5px;height:19.5px;border-radius:4.500px;background:#fff;border:1.300px solid #cfcfcf"></div>
<span class="t" style="left:434.20px;top:753.30px;font-size:13px;line-height:19px;font-weight:400;color:#555;letter-spacing:0.447px;">28.02.2023</span>
<span class="t" style="left:854.20px;top:753.30px;font-size:13px;line-height:19px;font-weight:400;color:#555;letter-spacing:0.094px;">Нераспределенный расход</span>
<span class="t" style="right:730.30px;top:753.30px;font-size:13px;line-height:19px;font-weight:400;color:#4d7abf;letter-spacing:0.338px;">60.00</span>
<span class="t" style="right:610.50px;top:753.30px;font-size:13px;line-height:19px;font-weight:400;color:#555;letter-spacing:0.566px;">0</span>
<span class="t" style="left:434.20px;top:788.30px;font-size:13px;line-height:19px;font-weight:400;color:#555;letter-spacing:0.447px;">28.02.2023</span>
<span class="t" style="left:854.20px;top:788.30px;font-size:13px;line-height:19px;font-weight:400;color:#555;letter-spacing:0.094px;">Нераспределенный расход</span>
<span class="t" style="right:730.30px;top:788.30px;font-size:13px;line-height:19px;font-weight:400;color:#4d7abf;letter-spacing:0.270px;">1 530.00</span>
<span class="t" style="right:610.50px;top:788.30px;font-size:13px;line-height:19px;font-weight:400;color:#555;letter-spacing:0.566px;">0</span>
<div class="a" style="left:396px;top:787px;width:21px;height:18px;overflow:hidden"><div class="a" style="left:0.200px;top:0.500px;width:19.500px;height:19.500px;border-radius:4.500px;background:#fff;border:1.300px solid #cfcfcf"></div></div>
<div class="a" style="left:389px;top:805px;width:1497px;height:12px;background:#f1f1f1;border-radius:6px;box-shadow:inset 0 1px 2px rgba(0,0,0,.12);"></div>
<div class="a" style="left:389px;top:805px;width:1040px;height:12px;background:#c9c9c9;border-radius:6px;"></div>
<div class="a" style="left:388px;top:846px;width:199px;height:40px;border:1px solid #9a9a9a;border-radius:4px;background:#fff"></div>
<div class="a" style="left:595px;top:846px;width:130px;height:40px;border:1px solid #9a9a9a;border-radius:4px;background:#fff"></div>
<div class="a" style="left:733px;top:846px;width:99px;height:40px;border:1px solid #9a9a9a;border-radius:4px;background:#fff"></div>
<svg style="left:406px;top:857.500px" width="18" height="18" viewBox="0 0 18 18"><path d="M9 0V18M0 9H18" stroke="#222" stroke-width="1.500"/></svg>
<span class="t" style="left:437.40px;top:857.82px;font-size:13.5px;line-height:20px;font-weight:400;color:#222;letter-spacing:0.607px;">Добавить документ</span>
<span class="t" style="left:612.00px;top:857.82px;font-size:13.5px;line-height:20px;font-weight:400;color:#222;letter-spacing:0.318px;">Импорт файла</span>
<span class="t" style="left:750.80px;top:857.82px;font-size:13.5px;line-height:20px;font-weight:400;color:#222;letter-spacing:0.437px;">Обновить</span>
<div class="a" style="left:1838.600px;top:842px;width:48px;height:48px;border-radius:50%;background:#5a5a5a"></div>
<svg style="left:1853.100px;top:856px" width="20" height="20" viewBox="0 0 20 20"><circle cx="10" cy="10" r="9.100" fill="none" stroke="#fff" stroke-width="2.200"/><rect x="8.800" y="8.500" width="2.400" height="6.400" fill="#fff"/><rect x="8.800" y="5" width="2.400" height="2.100" fill="#fff"/></svg>
<svg style="left:1810px;top:127px" width="15" height="15.500" viewBox="0 0 24 24"><g fill="none" stroke="#4d97f3" stroke-width="1.500" stroke-linejoin="round"><circle cx="12" cy="12" r="3.200"/><path d="M10.300 1.500h3.400l.6 2.800 1.900.8 2.400-1.600 2.400 2.400-1.600 2.400.8 1.900 2.800.6v3.400l-2.800.6-.8 1.900 1.600 2.400-2.400 2.400-2.400-1.600-1.900.8-.6 2.800h-3.400l-.6-2.800-1.900-.8-2.400 1.600-2.400-2.400 1.600-2.400-.8-1.900-2.800-.6v-3.400l2.800-.6.8-1.900-1.600-2.400 2.400-2.400 2.400 1.600 1.900-.8z"/></g></svg>
<svg style="left:1830px;top:130px" width="12" height="10" viewBox="0 0 12 10"><path d="M1.500 7.600L6 3.100L10.500 7.600" fill="none" stroke="#2b2b2b" stroke-width="2"/></svg>
<div class="a" style="left:1532px;top:147px;width:320px;height:396px;background:#fff;border:1px solid #d5d8df;border-radius:5px;box-shadow:0 2px 10px rgba(0,0,0,.045)"></div>
<div class="a" style="left:1844.3px;top:155px;width:6.7px;height:330px;background:#e4e4e4;border-radius:3px;"></div>
<div class="a" style="left:1844.3px;top:155px;width:6.7px;height:109.5px;background:#c9c9c9;border-radius:3px;"></div>
<div class="a" style="left:1549.2px;top:166.3px;width:19.3px;height:19.3px;border-radius:4.500px;background:#3ea2df"></div>
<svg style="left:1549.2px;top:166.3px" width="20" height="20" viewBox="0 0 20 20"><path d="M4.300 10.600L7.900 13.900L15.400 6" fill="none" stroke="#fff" stroke-width="2.200"/></svg>
<span class="t" style="left:1577.30px;top:167.02px;font-size:13.5px;line-height:20px;font-weight:400;color:#555;letter-spacing:0.355px;">Раздел</span>
<div class="a" style="left:1549.2px;top:206.3px;width:19.3px;height:19.3px;border-radius:4.500px;background:#fff;border:1.300px solid #cfcfcf"></div>
<span class="t" style="left:1577.30px;top:207.02px;font-size:13.5px;line-height:20px;font-weight:400;color:#555;letter-spacing:0.646px;">Проект</span>
<div class="a" style="left:1549.2px;top:246.3px;width:19.3px;height:19.3px;border-radius:4.500px;background:#3ea2df"></div>
<svg style="left:1549.2px;top:246.3px" width="20" height="20" viewBox="0 0 20 20"><path d="M4.300 10.600L7.900 13.900L15.400 6" fill="none" stroke="#fff" stroke-width="2.200"/></svg>
<span class="t" style="left:1577.30px;top:247.02px;font-size:13.5px;line-height:20px;font-weight:400;color:#555;letter-spacing:0.371px;">Город</span>
<div class="a" style="left:1549.2px;top:286.3px;width:19.3px;height:19.3px;border-radius:4.500px;background:#fff;border:1.300px solid #cfcfcf"></div>
<span class="t" style="left:1577.30px;top:287.02px;font-size:13.5px;line-height:20px;font-weight:400;color:#555;letter-spacing:0.504px;">Валюта документа</span>
<div class="a" style="left:1549.2px;top:326.3px;width:19.3px;height:19.3px;border-radius:4.500px;background:#fff;border:1.300px solid #cfcfcf"></div>
<span class="t" style="left:1577.30px;top:327.02px;font-size:13.5px;line-height:20px;font-weight:400;color:#555;letter-spacing:0.365px;">Сумма без НДС в валюте документа</span>
<div class="a" style="left:1549.2px;top:366.3px;width:19.3px;height:19.3px;border-radius:4.500px;background:#fff;border:1.300px solid #cfcfcf"></div>
<span class="t" style="left:1577.30px;top:367.02px;font-size:13.5px;line-height:20px;font-weight:400;color:#555;letter-spacing:0.333px;">Сумма с НДС в валюте документа</span>
<div class="a" style="left:1549.2px;top:406.3px;width:19.3px;height:19.3px;border-radius:4.500px;background:#fff;border:1.300px solid #cfcfcf"></div>
<span class="t" style="left:1577.30px;top:407.02px;font-size:13.5px;line-height:20px;font-weight:400;color:#555;letter-spacing:0.244px;">Сумма с НДС в валюте учета</span>
<div class="a" style="left:1549.2px;top:446.3px;width:19.3px;height:19.3px;border-radius:4.500px;background:#3ea2df"></div>
<svg style="left:1549.2px;top:446.3px" width="20" height="20" viewBox="0 0 20 20"><path d="M4.300 10.600L7.900 13.900L15.400 6" fill="none" stroke="#fff" stroke-width="2.200"/></svg>
<span class="t" style="left:1577.30px;top:447.02px;font-size:13.5px;line-height:20px;font-weight:400;color:#555;letter-spacing:0.678px;">Количество</span>
<div class="a" style="left:1732px;top:494.300px;width:103px;height:31.500px;background:#3ea2df;border-radius:3px"></div>
<span class="t" style="left:1748.00px;top:501.12px;font-size:13.5px;line-height:20px;font-weight:400;color:#fff;letter-spacing:0.488px;-webkit-text-stroke:0.3px #fff;">Сохранить</span>
<div class="a" style="left:99px;top:178px;width:265px;height:728px;border:4px solid #007bff"></div>
<div class="a" style="left:1528px;top:114px;width:333px;height:445.500px;border:4px solid #007bff"></div>
<span class="t" style="left:326.80px;top:147.76px;font-size:16px;line-height:23px;font-weight:400;color:#007bff;">1</span>
<span class="t" style="left:1677.00px;top:91.96px;font-size:16px;line-height:23px;font-weight:400;color:#007bff;">2</span>
<svg style="left:1790px;top:270px" width="40" height="40" viewBox="0 0 40 40"><path d="M15.400 25.400V12.600A1.750 1.750 0 0 1 18.900 12.600V17.300A1.300 1.300 0 0 1 21.500 17.300V17.900A1.500 1.500 0 0 1 24.500 18.100V18.900A1.600 1.600 0 0 1 27.700 19.600V27.500C27.700 31.500 24.500 34.400 20.800 34.400C17.500 34.400 15.800 32.600 13.800 30L10.700 25.900C9.700 24.500 11.300 22.700 12.800 23.600Z" fill="#fff" stroke="#12122a" stroke-width="1.050" stroke-linejoin="round"/><path d="M18.600 17V21.700M21.450 17.800V21.700M24.500 18.600V21.700" fill="none" stroke="#12122a" stroke-width="1.050" stroke-linecap="round"/></svg>
</body></html>
